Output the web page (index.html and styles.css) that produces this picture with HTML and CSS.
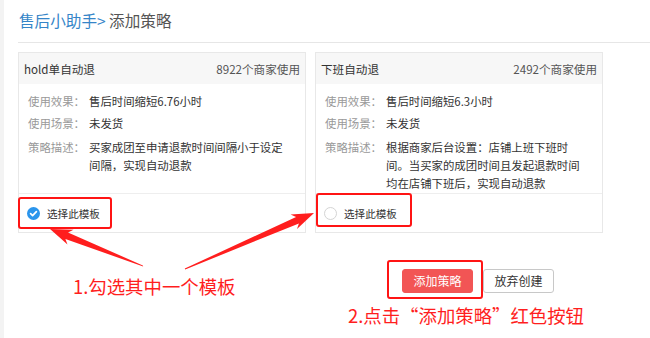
FILE: index.html
```html
<!DOCTYPE html>
<html lang="zh-CN">
<head>
  <meta charset="UTF-8">
  <title>添加策略</title>
  <link rel="stylesheet" href="styles.css">
</head>
<body>
  <div class="page">
    <div class="crumb"><span class="crumb-link">售后小助手&gt;</span> 添加策略</div>

    <div class="cards">
      <div class="card">
        <div class="card-head">
          <span class="card-name">hold单自动退</span>
          <span class="card-count">8922个商家使用</span>
        </div>
        <div class="card-body">
          <div class="row"><span class="label">使用效果：</span><span class="value">售后时间缩短6.76小时</span></div>
          <div class="row"><span class="label">使用场景：</span><span class="value">未发货</span></div>
          <div class="row row-desc"><span class="label">策略描述：</span><span class="value">买家成团至申请退款时间间隔小于设定间隔，实现自动退款</span></div>
        </div>
        <div class="card-foot">
          <span class="check is-on">
            <svg width="13" height="13" viewBox="0 0 13 13"><circle cx="6.5" cy="6.5" r="6.5" fill="#2b95ec"/><path d="M3.6 6.7 L5.6 8.6 L9.4 4.6" fill="none" stroke="#fff" stroke-width="1.7" stroke-linecap="round" stroke-linejoin="round"/></svg>
          </span>
          选择此模板
        </div>
      </div>

      <div class="card">
        <div class="card-head">
          <span class="card-name">下班自动退</span>
          <span class="card-count">2492个商家使用</span>
        </div>
        <div class="card-body">
          <div class="row"><span class="label">使用效果：</span><span class="value">售后时间缩短6.3小时</span></div>
          <div class="row"><span class="label">使用场景：</span><span class="value">未发货</span></div>
          <div class="row row-desc"><span class="label">策略描述：</span><span class="value">根据商家后台设置：店铺上班下班时间。当买家的成团时间且发起退款时间均在店铺下班后，实现自动退款</span></div>
        </div>
        <div class="card-foot">
          <span class="check"></span>
          选择此模板
        </div>
      </div>
    </div>

    <div class="actions">
      <button class="btn btn-primary">添加策略</button>
      <button class="btn">放弃创建</button>
    </div>
  </div>

  <!-- annotation layer -->
  <svg class="marks" width="650" height="338" viewBox="0 0 650 338">
    <g fill="none" stroke="#ff1414" stroke-width="2">
      <rect x="19" y="198" width="92" height="30" rx="2"/>
      <rect x="317" y="194" width="94" height="32" rx="2"/>
      <rect x="388" y="261" width="94" height="37" rx="2"/>
    </g>
    <g fill="#ff1e1e">
      <polygon points="50,229 73.5,229.7 68,232.4 142.8,265.5 143.2,266.5 65.4,239 67.5,244.5"/>
      <polygon points="314,213 290.6,214.5 296.1,217 184.8,268.5 185.2,269.5 298.9,223.4 297,229.1"/>
    </g>
  </svg>
  <div class="note note-1">1.勾选其中一个模板</div>
  <div class="note note-2">2.点击“添加策略”红色按钮</div>
</body>
</html>
```

FILE: styles.css
```css
body {
  margin: 0;
  background-color: #f3f3f3;
  font-family: "Noto Sans CJK SC", "Noto Sans", sans-serif;
  color: #333;
  position: relative;
  width: 650px;
  height: 338px;
  overflow: hidden;
}
.page {
  margin-left: 4px;
  height: 338px;
  padding-left: 14px;
  background-color: #fff;
  box-sizing: border-box;
}
.crumb {
  padding: 11px 0 13px 1px;
  font-size: 15.6px;
  line-height: 18px;
  color: #555;
  border-bottom: 1px solid #e6e6e6;
}
.crumb-link {
  color: #3585c8;
}
.cards {
  display: flex;
  gap: 9px;
  margin-top: 9px;
}
.card {
  width: 288px;
  box-sizing: border-box;
  border: 1px solid #e8e8e8;
  display: flex;
  flex-direction: column;
}
.card-head {
  height: 31px;
  padding: 0 5px;
  background-color: #f7f7f7;
  display: flex;
  justify-content: space-between;
  align-items: center;
  font-size: 11.6px;
}
.card-name {
  color: #333;
}
.card-count {
  color: #555;
}
.card-body {
  flex: 1;
  padding: 8px 0 1px 9px;
  font-size: 11.4px;
  line-height: 18px;
}
.row {
  display: flex;
}
.row + .row {
  margin-top: 4px;
}
.row.row-desc {
  margin-top: 6px;
}
.label {
  width: 61px;
  flex-shrink: 0;
  color: #999;
}
.value {
  width: 200px;
  color: #333;
}
.card-foot {
  height: 38px;
  border-top: 1px solid #eee;
  display: flex;
  align-items: center;
  gap: 7px;
  padding-left: 8px;
  font-size: 10.6px;
  color: #333;
}
.check {
  width: 13px;
  height: 13px;
  box-sizing: border-box;
  border: 1px solid #d4d4d4;
  border-radius: 50%;
  display: block;
}
.check.is-on {
  border: none;
}
.check svg {
  display: block;
}
.actions {
  display: flex;
  gap: 10px;
  margin-top: 36px;
  padding-left: 384px;
}
.btn {
  width: 71px;
  height: 24px;
  padding: 0;
  border: 1px solid #c8c8c8;
  border-radius: 3px;
  background-color: #fff;
  color: #333;
  font-family: inherit;
  font-size: 12px;
  line-height: 22px;
}
.btn-primary {
  background-color: #f25555;
  border-color: #f25555;
  color: #fff;
}
.marks {
  position: absolute;
  left: 0;
  top: 0;
}
.note {
  position: absolute;
  font-size: 18.4px;
  line-height: 22px;
  color: #ff1e1e;
  white-space: nowrap;
}
.note-1 {
  left: 73px;
  top: 275px;
}
.note-2 {
  left: 348px;
  top: 304px;
}
```
